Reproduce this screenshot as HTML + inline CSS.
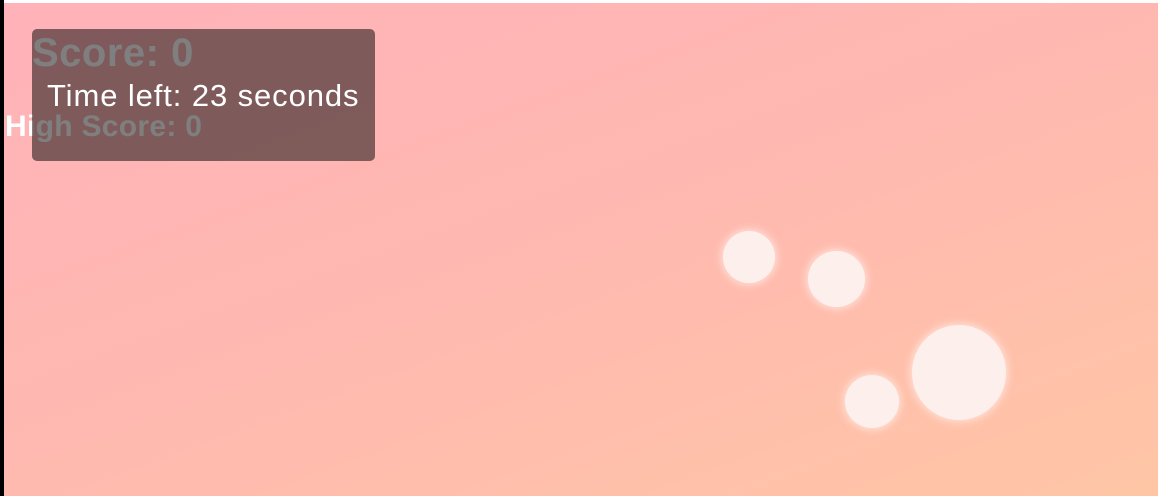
<!DOCTYPE html>
<html><head><style>
html,body{margin:0;padding:0;width:1158px;height:496px;overflow:hidden;}
body{position:relative;background:#fff;font-family:"Liberation Sans",Roboto,sans-serif;}
#bg{position:absolute;left:4px;top:3px;right:0;bottom:0;background:linear-gradient(160deg,#ffb2b9 0%,#ffb9b0 50%,#ffc6a6 100%);}
#strip{position:absolute;left:0;top:0;width:4px;height:496px;background:#000;}
.t{position:absolute;color:#fff;white-space:nowrap;}
#score{left:32px;top:31px;font-size:40px;font-weight:bold;letter-spacing:0.5px;}
#high{left:5px;top:110px;font-size:30px;font-weight:bold;letter-spacing:0.3px;}
#box{position:absolute;left:32px;top:29px;width:343px;height:132px;background:rgba(0,0,0,0.5);border-radius:5px;}
#time{left:47px;top:78px;font-size:31px;letter-spacing:0.9px;}
.c{position:absolute;border-radius:50%;background:#fdf0ec;box-shadow:0 0 8px 2px rgba(255,240,235,0.7);}
</style></head><body>
<div id="bg"></div><div id="strip"></div>
<div class="t" id="score">Score: 0</div>
<div class="t" id="high">High Score: 0</div>
<div id="box"></div>
<div class="t" id="time">Time left: 23 seconds</div>
<div class="c" style="left:723px;top:231px;width:52px;height:52px"></div>
<div class="c" style="left:808px;top:251px;width:57px;height:56px"></div>
<div class="c" style="left:912px;top:325px;width:94px;height:95px"></div>
<div class="c" style="left:845px;top:375px;width:54px;height:53px"></div>
</body></html>
